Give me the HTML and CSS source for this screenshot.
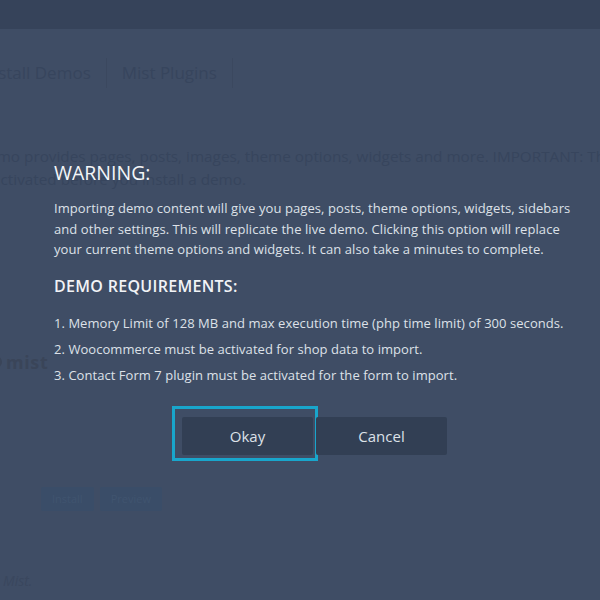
FILE: index.html
```html
<html>
  <head>
    <meta charset="UTF-8">
    <title>Install Demos</title>
    <link rel="stylesheet" href="styles.css">
  </head>
  <body>
    <div class="page">
      <div class="page-topbar"></div>

      <div class="page-tabs">
        <div class="page-tab">Install Demos</div>
        <div class="page-tab">Mist Plugins</div>
      </div>

      <div class="page-desc">
        Demo provides pages, posts, images, theme options, widgets and more. IMPORTANT: The required plugins must be<br>
        activated before you install a demo.
      </div>

      <div class="page-logo"><span class="page-logo-dot"></span>mist</div>

      <div class="page-actions">
        <span class="page-button">Install</span>
        <span class="page-button">Preview</span>
      </div>

      <div class="page-footer">Thank you for Mist.</div>
    </div>

    <div class="overlay">
      <div class="modal">
        <h2 class="modal-title">WARNING:</h2>
        <p class="modal-text">Importing demo content will give you pages, posts, theme options, widgets, sidebars and other settings. This will replicate the live demo. Clicking this option will replace your current theme options and widgets. It can also take a minutes to complete.</p>

        <h3 class="modal-subtitle">DEMO REQUIREMENTS:</h3>
        <ol class="modal-list">
          <li>1. Memory Limit of 128 MB and max execution time (php time limit) of 300 seconds.</li>
          <li>2. Woocommerce must be activated for shop data to import.</li>
          <li>3. Contact Form 7 plugin must be activated for the form to import.</li>
        </ol>

        <div class="modal-buttons">
          <div class="modal-button modal-button-focus">Okay</div>
          <div class="modal-button">Cancel</div>
        </div>
      </div>
    </div>
  </body>
</html>
```

FILE: styles.css
```css
body {
  margin: 0;
  width: 600px;
  height: 600px;
  overflow: hidden;
  position: relative;
  background-color: #3f4d65;
  font-family: "Open Sans", "Noto Sans", sans-serif;
}

/* faded page behind the dialog */
.page {
  color: #37455d;
}

.page-topbar {
  height: 29px;
  background-color: #36435a;
}

.page-tabs {
  display: flex;
  margin: 29px 0 0 -32px;
  height: 30px;
}

.page-tab {
  font-size: 17px;
  line-height: 30px;
  padding: 0 15px;
  border-right: 1px solid #3b485f;
}

.page-desc {
  margin: 57px 0 0 -8px;
  text-indent: -15px;
  font-size: 15.3px;
  line-height: 23px;
  white-space: nowrap;
}

.page-logo {
  display: flex;
  align-items: center;
  margin: 160px 0 0 -10px;
  font-size: 18px;
  font-weight: 700;
  line-height: 22px;
  letter-spacing: 0.6px;
  color: #3a4559;
}

.page-logo-dot {
  width: 8px;
  height: 8px;
  border: 2px solid #3a4559;
  border-radius: 50%;
  margin-right: 4px;
}

.page-actions {
  display: flex;
  gap: 6px;
  margin: 114px 0 0 41px;
}

.page-button {
  padding: 0 11px;
  height: 24px;
  line-height: 24px;
  font-size: 11px;
  border-radius: 2px;
  background-color: #3a4d68;
  color: #40546f;
}

.page-footer {
  margin: 60px 0 0 -86px;
  font-size: 14px;
  font-style: italic;
  color: #3a475e;
}

/* dialog */
.overlay {
  position: absolute;
  top: 0;
  left: 0;
  width: 100%;
  height: 100%;
}

.modal {
  padding: 160px 25px 0 54px;
  color: #dde1e8;
}

.modal-title {
  margin: 0 0 12px;
  font-size: 19.5px;
  font-weight: 400;
  line-height: 26px;
  color: #f4f6f8;
}

.modal-text {
  margin: 0;
  font-size: 13px;
  line-height: 20.5px;
  letter-spacing: 0.08px;
}

.modal-subtitle {
  margin: 15px 0 16px;
  font-size: 16px;
  font-weight: 600;
  line-height: 22px;
  letter-spacing: 0.3px;
  color: #f1f3f6;
}

.modal-list {
  list-style: none;
  margin: 0;
  padding: 0;
  font-size: 13px;
  line-height: 20px;
  letter-spacing: 0.05px;
}

.modal-list li {
  margin-bottom: 6px;
}

.modal-buttons {
  display: flex;
  justify-content: center;
  gap: 3px;
  margin-top: 32px;
}

.modal-button {
  position: relative;
  width: 131px;
  height: 38px;
  line-height: 38px;
  text-align: center;
  font-size: 15px;
  color: #dde1e8;
  background-color: #323f54;
  border-radius: 2px;
}

.modal-button-focus::after {
  content: "";
  position: absolute;
  top: -11px;
  left: -10px;
  width: 140px;
  height: 49px;
  border: 3px solid #19a6cc;
}
```
